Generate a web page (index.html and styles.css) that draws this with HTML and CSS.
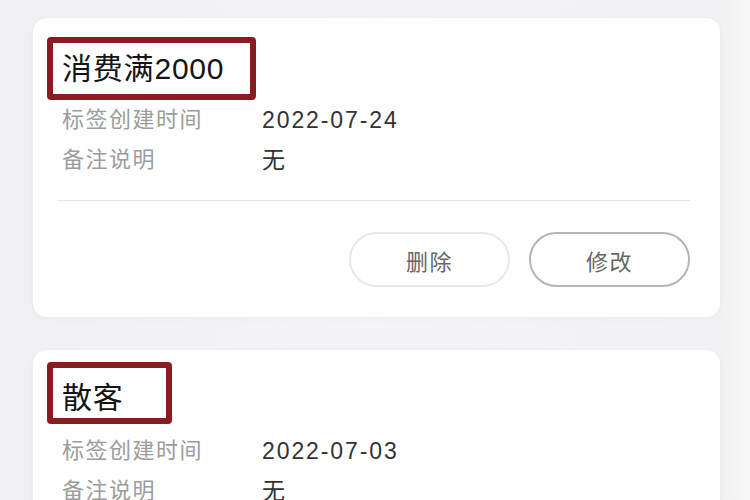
FILE: index.html
```html
<!DOCTYPE html>
<html lang="zh-CN">
<head>
<meta charset="utf-8">
<title>标签</title>
<link rel="stylesheet" href="styles.css">
</head>
<body>
<div class="page">
  <div class="card card-first">
    <div class="hl hl-first"><span class="title">消费满2000</span></div>
    <div class="row"><span class="label">标签创建时间</span><span class="value">2022-07-24</span></div>
    <div class="row"><span class="label">备注说明</span><span class="value">无</span></div>
    <div class="divider"></div>
    <div class="actions">
      <button class="btn btn-light">删除</button>
      <button class="btn btn-dark">修改</button>
    </div>
  </div>
  <div class="card card-second">
    <div class="hl hl-second"><span class="title">散客</span></div>
    <div class="row row-first2"><span class="label">标签创建时间</span><span class="value">2022-07-03</span></div>
    <div class="row"><span class="label">备注说明</span><span class="value">无</span></div>
  </div>
</div>
</body>
</html>
```
FILE: styles.css
```css
html, body {
  margin: 0;
  padding: 0;
  background: #f2f2f4;
  font-family: "Liberation Sans", "Noto Sans CJK SC", sans-serif;
}
.page {
  width: 750px;
  height: 500px;
  overflow: hidden;
  padding: 18px 30px 0 33px;
  box-sizing: border-box;
  display: flex;
  flex-direction: column;
  gap: 33px;
  background: linear-gradient(to right, #f0f0f2 0%, #f4f4f6 50%, #f1f1f3 96%, #f7f7f8 100%);
}
.card {
  background: #fefefe;
  border-radius: 14px;
  box-shadow: 0 1px 6px rgba(0, 0, 0, 0.035);
  padding: 19px 30px 30px 29px;
  flex-shrink: 0;
}
.card-second {
  padding-top: 12px;
}
.hl {
  display: block;
  border: 6px solid #8a1b20;
  border-radius: 4px;
  margin-left: -15px;
  padding-left: 9px;
  box-sizing: border-box;
}
.hl-first {
  width: 209px;
  height: 63px;
  line-height: 51px;
}
.hl-second {
  width: 125px;
  height: 62px;
  padding-top: 10px;
  line-height: 40px;
}
.title {
  font-size: 30px;
  color: #141414;
  letter-spacing: 0.8px;
}
.row {
  display: flex;
  height: 40px;
  line-height: 40px;
  font-size: 22px;
}
.row-first2 {
  margin-top: 7px;
}
.label {
  width: 200px;
  color: #9c9c9c;
  letter-spacing: 1.5px;
}
.value {
  color: #333;
  font-size: 23px;
  letter-spacing: 1.9px;
}
.divider {
  height: 1px;
  background: #e4e4e4;
  margin-top: 20px;
  margin-left: -5px;
}
.actions {
  display: flex;
  justify-content: flex-end;
  gap: 19px;
  margin-top: 31px;
}
.btn {
  width: 161px;
  height: 55px;
  border-radius: 28px;
  background: #fefefe;
  font-family: "Liberation Sans", "Noto Sans CJK SC", sans-serif;
  font-size: 22px;
  letter-spacing: 1.5px;
  color: #666;
  padding: 0;
}
.btn-light {
  border: 2px solid #e8e8e8;
}
.btn-dark {
  border: 2px solid #b4b4b4;
}
```
